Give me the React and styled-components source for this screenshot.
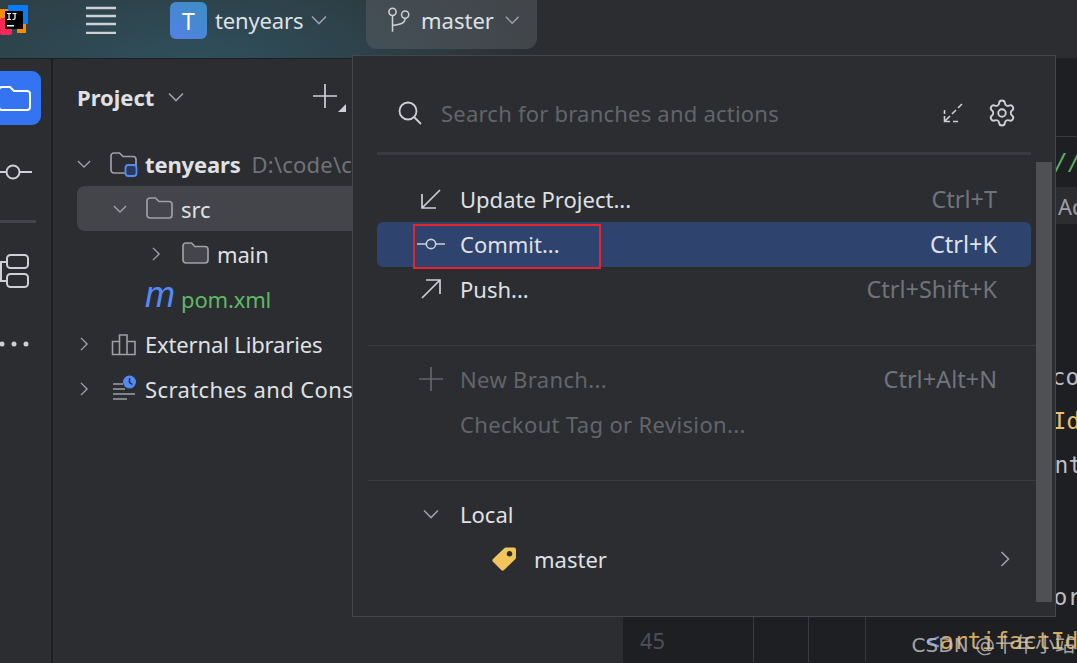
import React from 'react'
import styled, { createGlobalStyle } from 'styled-components'
import { Settings } from 'lucide-react'

const GlobalStyle = createGlobalStyle`
  html, body {
    margin: 0;
    height: 100%;
    background: #2b2d30;
    overflow: hidden;
  }
  * {
    box-sizing: border-box;
  }
`

const Frame = styled.div`
  position: relative;
  width: 1077px;
  height: 663px;
  display: flex;
  flex-direction: column;
  overflow: hidden;
  font-family: 'Noto Sans', 'Open Sans', sans-serif;
  font-size: 22px;
  color: #dfe1e5;
  background: #2b2d30;
`

const Header = styled.header`
  flex: 0 0 59px;
  display: flex;
  align-items: flex-start;
  border-bottom: 1px solid #1e1f22;
  background:
    radial-gradient(ellipse 340px 110px at 190px 60px, #2f4f5b 0%, rgba(47, 79, 91, 0) 100%),
    linear-gradient(90deg, #2d3b41 0%, #2c3a40 25%, #2b2d30 52%);
`

const Logo = styled.svg`
  flex: none;
  width: 28px;
  height: 36px;
`

const Burger = styled.svg`
  flex: none;
  width: 30px;
  height: 28px;
  margin: 6px 0 0 58px;
`

const Avatar = styled.div`
  flex: none;
  width: 37px;
  height: 37px;
  margin: 2px 0 0 54px;
  border-radius: 6px;
  display: flex;
  align-items: center;
  justify-content: center;
  color: #fff;
  font-size: 23px;
  background: linear-gradient(35deg, #5580e8 0%, #3b8fc0 100%);
`

const ProjectName = styled.div`
  display: flex;
  align-items: center;
  gap: 8px;
  height: 40px;
  margin-left: 8px;
  letter-spacing: -0.15px;
`

const BranchWidget = styled.div`
  display: flex;
  align-items: center;
  gap: 11px;
  width: 171px;
  height: 49px;
  margin-left: 39px;
  padding: 0 18px 9px 22px;
  border-radius: 0 0 11px 11px;
  background: rgba(90, 93, 99, 0.5);
`

const Body = styled.div`
  flex: 1;
  min-height: 0;
  display: flex;
`

const Rail = styled.nav`
  flex: 0 0 53px;
  display: flex;
  flex-direction: column;
  align-items: flex-start;
  padding-top: 12px;
  border-right: 2px solid #1e1f22;
  overflow: hidden;
`

const RailButton = styled.div`
  flex: none;
  width: 54px;
  height: 54px;
  margin-left: -13px;
  border-radius: 9px;
  display: flex;
  align-items: center;
  justify-content: center;
  background: #3574f0;
`

const RailIcon = styled.svg`
  flex: none;
  display: block;
  width: 36px;
  height: ${(props) => props.$h}px;
  margin-top: ${(props) => props.$top}px;
`

const RailDivider = styled.div`
  flex: none;
  width: 36px;
  height: 3px;
  margin-top: 36px;
  background: #43454a;
`

const Panel = styled.aside`
  flex: 0 0 570px;
  padding-top: 15px;
  background: #2b2d30;
`

const PanelHeader = styled.div`
  display: flex;
  align-items: center;
  height: 46px;
  padding-left: 24px;
  gap: 14px;
  margin-bottom: 21px;
`

const PanelTitle = styled.span`
  font-weight: 700;
  color: #dfe1e5;
`

const PlusWrap = styled.span`
  display: flex;
  margin-left: 114px;
`

const PlusCorner = styled.svg`
  flex: none;
  margin-top: 21px;
`

const TreeRow = styled.div`
  display: flex;
  align-items: center;
  height: 45px;
  margin: 0 10px 0 24px;
  padding-left: ${(props) => props.$depth * 36}px;
  border-radius: 8px;
  white-space: nowrap;
  overflow: hidden;
  letter-spacing: -0.15px;
  background: ${(props) => (props.$selected ? '#43454a' : 'transparent')};
`

const Twisty = styled.span`
  flex: none;
  width: 14px;
  display: flex;
  justify-content: center;
`

const TreeIcon = styled.span`
  flex: none;
  width: 28px;
  height: 28px;
  margin: 0 7px 0 19px;
  display: flex;
  align-items: center;
  justify-content: center;
`

const MavenGlyph = styled.span`
  font-family: 'Liberation Sans', sans-serif;
  font-style: italic;
  font-size: 36px;
  line-height: 28px;
  color: #548af7;
  margin-top: -7px;
`

const TreeLabel = styled.span`
  color: ${(props) => props.$color || '#dfe1e5'};
  font-weight: ${(props) => (props.$bold ? 700 : 400)};
  letter-spacing: ${(props) => props.$track || '-0.15px'};
`

const TreeHint = styled.span`
  margin-left: 11px;
  letter-spacing: 0.2px;
  color: #6f737a;
`

const Editor = styled.main`
  flex: 1;
  min-width: 0;
  display: flex;
  flex-direction: column;
  overflow: hidden;
  background: #1e1f22;
  font-family: 'DejaVu Sans Mono', 'Liberation Mono', monospace;
  font-size: 23px;
`

const EditorTabs = styled.div`
  flex: 0 0 78px;
  border-bottom: 1px solid #393b40;
`

const CommentRow = styled.div`
  flex: 0 0 50px;
  display: flex;
  align-items: center;
  padding-left: 431px;
  font-style: italic;
  white-space: nowrap;
  color: #5fad65;
`

const ActionBand = styled.div`
  flex: 0 0 37px;
  display: flex;
  align-items: center;
  padding-left: 435px;
  background: #2b2d30;
  color: #9da0a8;
  font-family: 'Noto Sans', sans-serif;
  font-size: 22px;
  white-space: nowrap;
`

const CodeArea = styled.div`
  flex: 1;
  min-height: 0;
  display: flex;
  flex-direction: column;
  justify-content: flex-end;
  padding-bottom: 1px;
`

const CodeRow = styled.div`
  flex: 0 0 44px;
  display: flex;
  align-items: stretch;
  white-space: pre;
`

const LineNumber = styled.div`
  flex: 0 0 131px;
  display: flex;
  align-items: center;
  padding-left: 17px;
  border-right: 1px solid #393b40;
  color: #4b5059;
  font-family: 'Noto Sans', sans-serif;
  font-size: 22px;
`

const GutterCell = styled.div`
  flex: 0 0 ${(props) => props.$w}px;
  border-right: 1px solid ${(props) => props.$line};
`

const Code = styled.div`
  display: flex;
  align-items: center;
  padding-top: 2px;
  padding-left: ${(props) => props.$indent}px;
  color: ${(props) => props.$color};
`

const Bracket = styled.span`
  color: #6f8fe0;
`

const Popup = styled.div`
  position: absolute;
  left: 352px;
  top: 55px;
  width: 704px;
  height: 562px;
  border: 1px solid #43454a;
  background: #2b2d30;
  overflow: hidden;
`

const SearchRow = styled.div`
  display: flex;
  align-items: center;
  height: 96px;
  padding: 18px 38px 0 45px;
`

const Placeholder = styled.span`
  flex: 1;
  margin-left: 19px;
  letter-spacing: 0.22px;
  color: #62656b;
`

const SearchActions = styled.div`
  display: flex;
  align-items: center;
  gap: 24px;
`

const SearchDivider = styled.div`
  height: 3px;
  margin: 0 24px;
  background: #393b40;
`

const Section = styled.div`
  padding: ${(props) => props.$top}px 0 ${(props) => props.$bottom}px;
  border-bottom: ${(props) => (props.$last ? 'none' : '1px solid #393b40')};
  margin-left: 15px;
  margin-right: 15px;
`

const MenuRow = styled.div`
  display: flex;
  align-items: center;
  height: 45px;
  margin: 0 9px;
  padding: 0 34px 2px ${(props) => props.$pad || 40}px;
  border-radius: 6px;
  white-space: nowrap;
  letter-spacing: ${(props) => (props.$disabled ? '0.35px' : '0')};
  background: ${(props) => (props.$active ? '#2e436e' : 'transparent')};
  color: ${(props) => (props.$disabled ? '#62656b' : '#dfe1e5')};
`

const MenuIcon = styled.span`
  flex: none;
  width: 28px;
  height: 28px;
  margin-right: ${(props) => props.$gap || 15}px;
  display: flex;
  align-items: center;
  justify-content: center;
`

const Shortcut = styled.span`
  margin-left: auto;
  font-size: 23.5px;
  letter-spacing: 0;
  color: ${(props) => (props.$active ? '#dfe1e5' : '#6f737a')};
`

const RowEnd = styled.span`
  margin-left: auto;
  margin-right: -16px;
  display: flex;
`

const Scrollbar = styled.div`
  position: absolute;
  left: 683px;
  top: 106px;
  width: 16px;
  height: 440px;
  background: #4e5054;
`

const Highlight = styled.div`
  position: absolute;
  left: 413px;
  top: 224px;
  width: 188px;
  height: 45px;
  border: 2px solid #e8222e;
`

const Watermark = styled.div`
  position: absolute;
  right: 2px;
  top: 631px;
  font-family: 'DejaVu Sans', 'Noto Sans CJK SC', sans-serif;
  font-size: 20px;
  line-height: 28px;
  white-space: nowrap;
  color: rgba(200, 200, 200, 0.8);
`

const Chevron = ({ dir = 'down', size = 16, color = '#9da0a8' }) => (
  <svg width={size} height={size} viewBox="0 0 16 16" fill="none">
    <path
      d={dir === 'down' ? 'M1 4.5L8 11.5L15 4.5' : 'M4.5 1L11.5 8L4.5 15'}
      stroke={color}
      strokeWidth="1.6"
    />
  </svg>
)

const FOLDER_PATH =
  'M1 5a3 3 0 0 1 3-3h5.500l3.500 3.500h10a3 3 0 0 1 3 3V19a3 3 0 0 1-3 3H4a3 3 0 0 1-3-3z'

const FolderIcon = ({ badge, fill = 'none', stroke = '#9da0a8' }) => (
  <svg width="28" height="26" viewBox="0 0 28 26" fill="none">
    <path d={FOLDER_PATH} stroke={stroke} strokeWidth="1.7" fill={fill} />
    {badge && <rect x="15.500" y="14" width="11" height="11" rx="3" fill="#2b3a5c" stroke="#548af7" strokeWidth="1.8" />}
  </svg>
)

const LibraryIcon = () => (
  <svg width="26" height="24" viewBox="0 0 26 24" fill="none" stroke="#9da0a8" strokeWidth="1.6">
    <path d="M1.500 9.500h7v13h-7zM8.500 3h7.500v19.500h-7.500zM16 9.500h8v13h-8z" />
  </svg>
)

const ScratchIcon = () => (
  <svg width="28" height="28" viewBox="0 0 28 28" fill="none">
    <path d="M3 9h10M3 14h12M3 19h22M3 24h14" stroke="#9da0a8" strokeWidth="1.6" />
    <circle cx="19.500" cy="7" r="6.500" fill="#548af7" />
    <path d="M19.500 3v4.500l3 2" stroke="#2b2d30" strokeWidth="1.5" />
  </svg>
)

const ArrowIcon = ({ up }) => (
  <svg width="22" height="22" viewBox="0 0 22 22" fill="none" stroke="#ced0d6" strokeWidth="1.7">
    {up ? <path d="M2 20L20 2M6 2h14v14" /> : <path d="M20 2L2 20M2 6v14h14" />}
  </svg>
)

const CommitIcon = () => (
  <svg width="30" height="14" viewBox="0 0 30 14" fill="none" stroke="#ced0d6" strokeWidth="1.7">
    <circle cx="15" cy="7" r="5" />
    <path d="M0 7h10M20 7h10" />
  </svg>
)

const BranchIcon = () => (
  <svg width="24" height="28" viewBox="0 0 24 28" fill="none" stroke="#ced0d6" strokeWidth="1.7">
    <circle cx="5" cy="5" r="4" />
    <circle cx="19" cy="8" r="4" />
    <path d="M5 9v18M19 12c0 6-6 7-14 8" />
  </svg>
)

const SearchIcon = () => (
  <svg width="24" height="24" viewBox="0 0 24 24" fill="none" stroke="#ced0d6" strokeWidth="1.8">
    <circle cx="10" cy="10" r="8.500" />
    <path d="M16 16l7 7" />
  </svg>
)

const CollapseIcon = () => (
  <svg width="20" height="20" viewBox="0 0 20 20" fill="none" stroke="#ced0d6" strokeWidth="1.6">
    <path d="M19 1l-4 4M13 7l-4 4M7 13l-5 5M1.500 7v4M1.500 13v5.500H7M10 18.500h5" />
  </svg>
)

const PlusIcon = ({ size = 26, color = '#ced0d6' }) => (
  <svg width={size} height={size} viewBox="0 0 26 26" fill="none" stroke={color} strokeWidth="1.7">
    <path d="M13 1v24M1 13h24" />
  </svg>
)

const TagIcon = () => (
  <svg width="25" height="25" viewBox="0 0 25 25">
    <path
      fillRule="evenodd"
      fill="#f2c55c"
      d="M14 1.500h8a2 2 0 0 1 2 2v8a2.500 2.500 0 0 1-.8 1.700L12 24a2 2 0 0 1-2.800 0L1 15.800a2 2 0 0 1 0-2.800L12.200 2.200A2.500 2.500 0 0 1 14 1.500zM17.500 5a2.800 2.800 0 1 0 .01 0z"
    />
  </svg>
)

const codeLines = [
  { n: 39, text: '<groupId>com.tenyears', color: '#bcbec4', indent: 61 },
  { n: 40, text: '<artifactId>', color: '#e8bf6a', indent: 62 },
  { n: 41, text: '  dependent', color: '#bcbec4', indent: 64 },
  { n: 42, text: '', color: '#bcbec4', indent: 60 },
  { n: 43, text: '', color: '#bcbec4', indent: 60 },
  { n: 44, text: '    <vendor', color: '#bcbec4', indent: 63 }
]

const App = () => {
  return (
    <Frame>
      <GlobalStyle />
      <Header>
        <Logo viewBox="0 0 28 36">
          <rect x="0" y="9" width="8" height="16" fill="#ff8a00" />
          <rect x="0" y="18" width="12" height="17" rx="2" fill="#fe2857" />
          <rect x="8" y="5" width="20" height="19" rx="1" fill="#087cfa" />
          <rect x="17" y="24" width="9" height="9" fill="#ff8a00" />
          <rect x="5" y="11" width="18" height="18" fill="#000" />
          <rect x="7" y="25" width="7" height="1.500" fill="#fff" />
          <path d="M7 13.500h4M9 13.500v6M7 19.500h4M12.500 13.500h4M15 13.500v4.500q0 1.500-2.500 1.500" stroke="#fff" strokeWidth="1.2" fill="none" />
        </Logo>
        <Burger viewBox="0 0 30 28" fill="none" stroke="#ced0d6" strokeWidth="2.4">
          <path d="M0 2h30M0 10h30M0 18h30M0 27h30" />
        </Burger>
        <Avatar>T</Avatar>
        <ProjectName>
          tenyears
          <Chevron />
        </ProjectName>
        <BranchWidget>
          <BranchIcon />
          master
          <Chevron />
        </BranchWidget>
      </Header>
      <Body>
        <Rail>
          <RailButton>
            <svg width="33" height="27" viewBox="0 0 33 27" fill="none" stroke="#fff" strokeWidth="2">
              <path d="M1 5a3 3 0 0 1 3-3h8l4 4h13a3 3 0 0 1 3 3v13a3 3 0 0 1-3 3H4a3 3 0 0 1-3-3z" />
            </svg>
          </RailButton>
          <RailIcon $h={24} $top={35} viewBox="0 0 36 24" fill="none" stroke="#ced0d6" strokeWidth="2">
            <circle cx="13" cy="12" r="6.500" />
            <path d="M0 12h6M20 12h12" />
          </RailIcon>
          <RailDivider />
          <RailIcon $h={36} $top={30} viewBox="0 0 36 36" fill="none" stroke="#ced0d6" strokeWidth="2">
            <rect x="7" y="2" width="21" height="13" rx="3.500" />
            <rect x="7" y="21" width="21" height="13" rx="3.500" />
            <path d="M0 9h7M0 28h7M1 9v19" />
          </RailIcon>
          <RailIcon $h={6} $top={52} viewBox="0 0 36 6" fill="#ced0d6">
            <circle cx="2" cy="3" r="2.500" />
            <circle cx="14" cy="3" r="2.500" />
            <circle cx="26" cy="3" r="2.500" />
          </RailIcon>
        </Rail>
        <Panel>
          <PanelHeader>
            <PanelTitle>Project</PanelTitle>
            <Chevron />
            <PlusWrap>
              <PlusIcon />
              <PlusCorner width="8" height="8" viewBox="0 0 8 8">
                <path d="M8 0v8H0z" fill="#ced0d6" />
              </PlusCorner>
            </PlusWrap>
          </PanelHeader>
          <TreeRow $depth={0}>
            <Twisty><Chevron /></Twisty>
            <TreeIcon><FolderIcon badge /></TreeIcon>
            <TreeLabel $bold>tenyears</TreeLabel>
            <TreeHint>D:\code\code\tenyears</TreeHint>
          </TreeRow>
          <TreeRow $depth={1} $selected>
            <Twisty><Chevron /></Twisty>
            <TreeIcon><FolderIcon /></TreeIcon>
            <TreeLabel>src</TreeLabel>
          </TreeRow>
          <TreeRow $depth={2}>
            <Twisty><Chevron dir="right" /></Twisty>
            <TreeIcon><FolderIcon fill="#43454a" /></TreeIcon>
            <TreeLabel>main</TreeLabel>
          </TreeRow>
          <TreeRow $depth={1}>
            <Twisty />
            <TreeIcon><MavenGlyph>m</MavenGlyph></TreeIcon>
            <TreeLabel $color="#5fb865">pom.xml</TreeLabel>
          </TreeRow>
          <TreeRow $depth={0}>
            <Twisty><Chevron dir="right" /></Twisty>
            <TreeIcon><LibraryIcon /></TreeIcon>
            <TreeLabel>External Libraries</TreeLabel>
          </TreeRow>
          <TreeRow $depth={0}>
            <Twisty><Chevron dir="right" /></Twisty>
            <TreeIcon><ScratchIcon /></TreeIcon>
            <TreeLabel $track="0.4px">Scratches and Consoles</TreeLabel>
          </TreeRow>
        </Panel>
        <Editor>
          <EditorTabs />
          <CommentRow>//</CommentRow>
          <ActionBand>Add</ActionBand>
          <CodeArea>
            {codeLines.map((line) => (
              <CodeRow key={line.n}>
                <LineNumber>{line.n}</LineNumber>
                <GutterCell $w={55} $line="#393b40" />
                <GutterCell $w={57} $line="#2b3a4a" />
                <Code $indent={line.indent} $color={line.color}>{line.text}</Code>
              </CodeRow>
            ))}
            <CodeRow>
              <LineNumber>45</LineNumber>
              <GutterCell $w={55} $line="#393b40" />
              <GutterCell $w={57} $line="#2b3a4a" />
              <Code $indent={60} $color="#d6a95c">
                <span><Bracket>&lt;</Bracket>artifactId</span>
              </Code>
            </CodeRow>
          </CodeArea>
        </Editor>
      </Body>
      <Popup>
        <SearchRow>
          <SearchIcon />
          <Placeholder>Search for branches and actions</Placeholder>
          <SearchActions>
            <CollapseIcon />
            <Settings size={30} strokeWidth={1.5} color="#ced0d6" />
          </SearchActions>
        </SearchRow>
        <SearchDivider />
        <Section $top={22} $bottom={33}>
          <MenuRow>
            <MenuIcon><ArrowIcon /></MenuIcon>
            Update Project...
            <Shortcut>Ctrl+T</Shortcut>
          </MenuRow>
          <MenuRow $active>
            <MenuIcon><CommitIcon /></MenuIcon>
            Commit...
            <Shortcut $active>Ctrl+K</Shortcut>
          </MenuRow>
          <MenuRow>
            <MenuIcon><ArrowIcon up /></MenuIcon>
            Push...
            <Shortcut>Ctrl+Shift+K</Shortcut>
          </MenuRow>
        </Section>
        <Section $top={11} $bottom={33}>
          <MenuRow $disabled>
            <MenuIcon><PlusIcon color="#62656b" /></MenuIcon>
            New Branch...
            <Shortcut>Ctrl+Alt+N</Shortcut>
          </MenuRow>
          <MenuRow $disabled $pad={83}>
            Checkout Tag or Revision...
          </MenuRow>
        </Section>
        <Section $top={11} $bottom={0} $last>
          <MenuRow>
            <MenuIcon><Chevron /></MenuIcon>
            Local
          </MenuRow>
          <MenuRow $pad={113}>
            <MenuIcon $gap={16}><TagIcon /></MenuIcon>
            master
            <RowEnd><Chevron dir="right" /></RowEnd>
          </MenuRow>
        </Section>
        <Scrollbar />
      </Popup>
      <Highlight />
      <Watermark>CSDN @十年小站</Watermark>
    </Frame>
  )
}

export default App
